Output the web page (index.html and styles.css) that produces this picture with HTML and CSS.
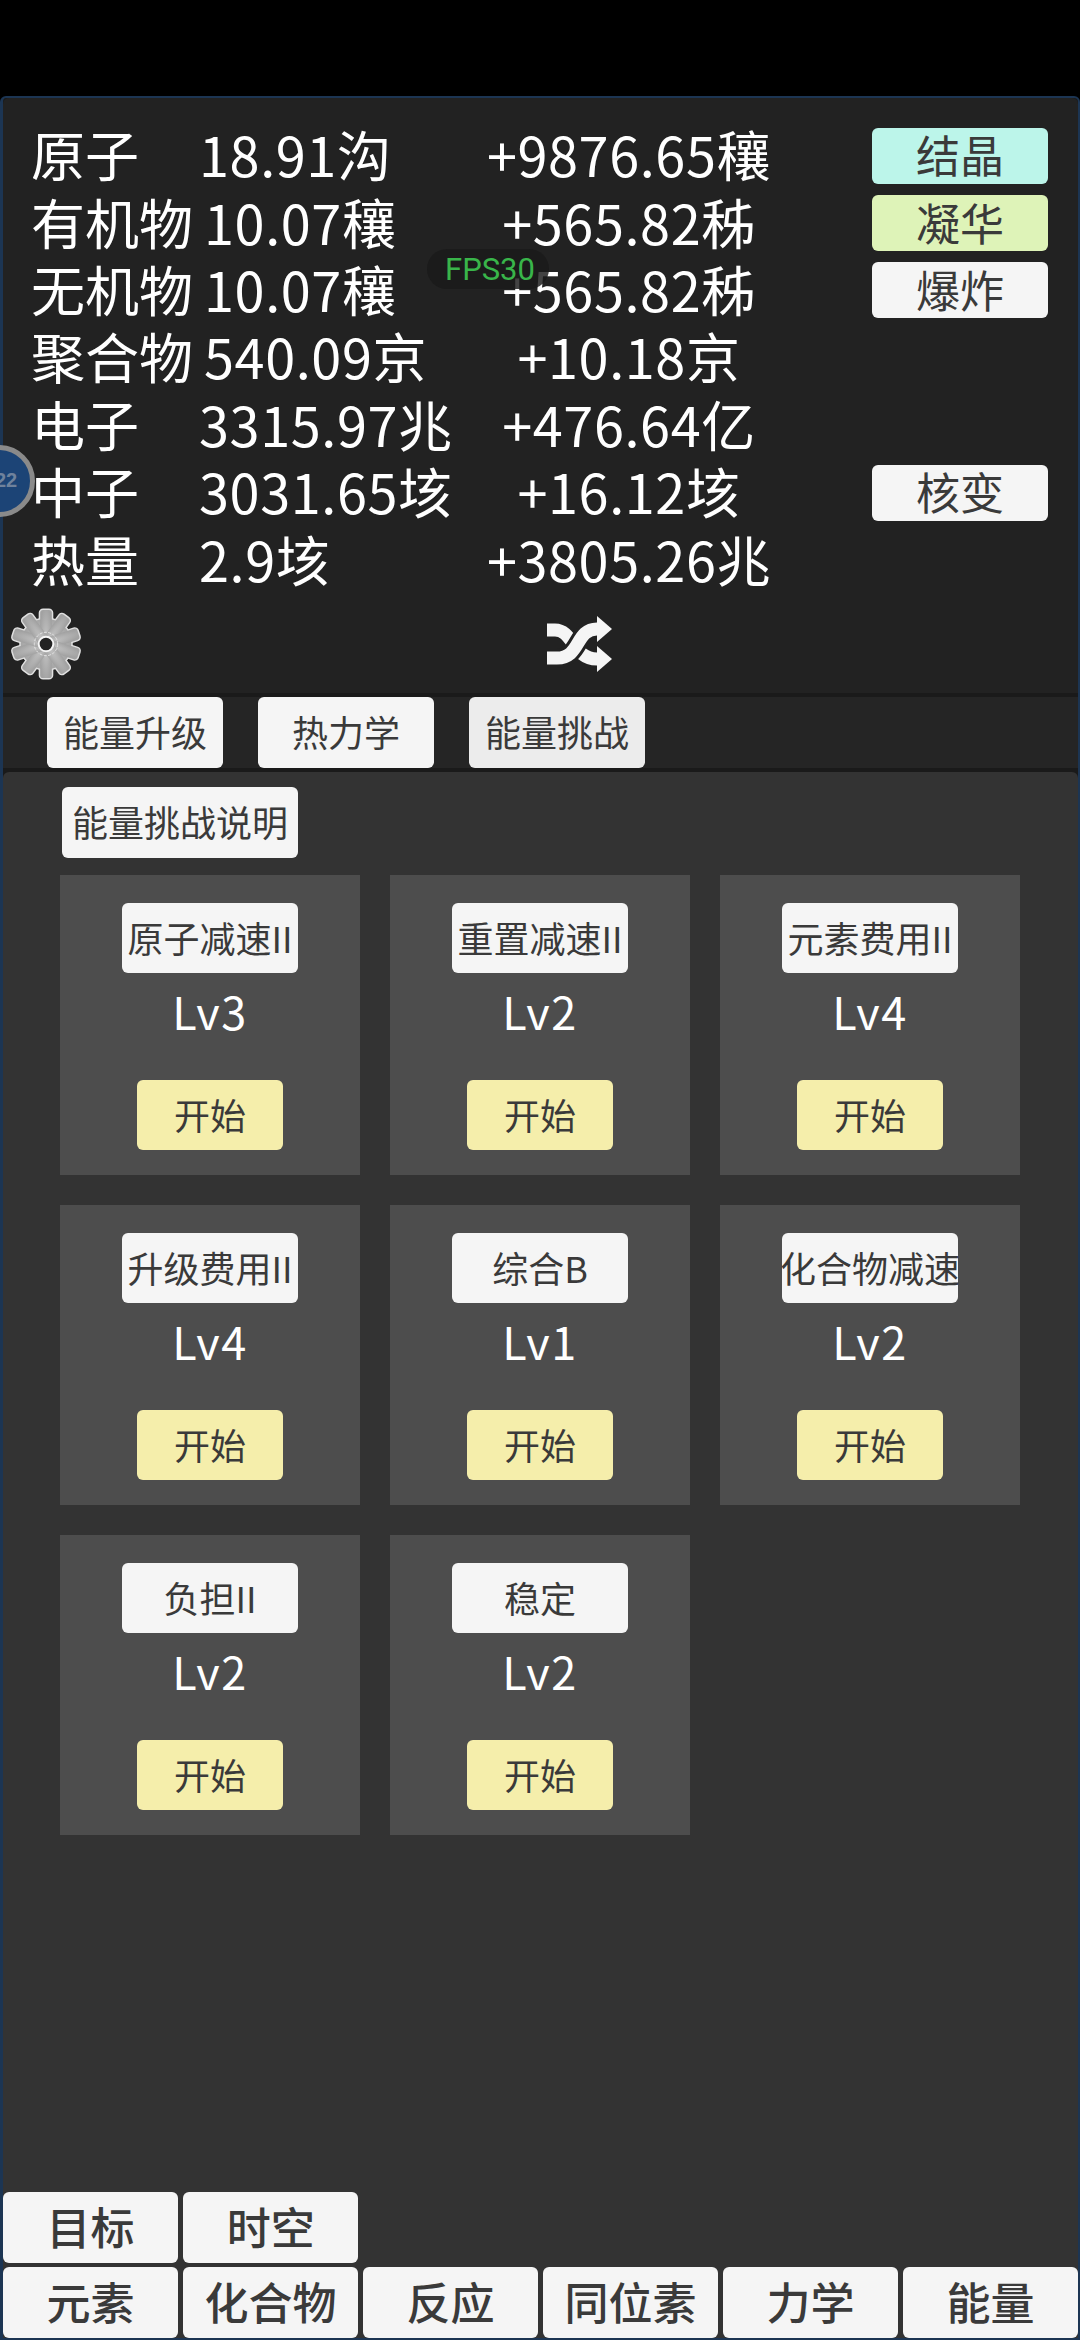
FILE: index.html
```html
<!DOCTYPE html>
<html lang="zh-CN">
<head>
  <meta charset="UTF-8">
  <meta name="viewport" content="width=device-width, initial-scale=1.0">
  <title>能量挑战</title>
  <link rel="stylesheet" href="styles.css">
</head>
<body>
  <div class="status-gap"></div>

  <div class="game">
    <header class="stats">
      <div class="stat-row">
        <div class="stat-main"><span class="name">原子</span><span>18.91沟</span></div>
        <span class="rate">+9876.65穰</span>
        <button class="btn side-btn crystal">结晶</button>
      </div>
      <div class="stat-row">
        <div class="stat-main"><span class="name">有机物</span><span>10.07穰</span></div>
        <span class="rate">+565.82秭</span>
        <button class="btn side-btn sublime">凝华</button>
      </div>
      <div class="stat-row">
        <div class="stat-main"><span class="name">无机物</span><span>10.07穰</span></div>
        <span class="rate">+565.82秭</span>
        <button class="btn side-btn">爆炸</button>
      </div>
      <div class="stat-row">
        <div class="stat-main"><span class="name">聚合物</span><span>540.09京</span></div>
        <span class="rate">+10.18京</span>
      </div>
      <div class="stat-row">
        <div class="stat-main"><span class="name">电子</span><span>3315.97兆</span></div>
        <span class="rate">+476.64亿</span>
      </div>
      <div class="stat-row">
        <div class="stat-main"><span class="name">中子</span><span>3031.65垓</span></div>
        <span class="rate">+16.12垓</span>
        <button class="btn side-btn">核变</button>
      </div>
      <div class="stat-row">
        <div class="stat-main"><span class="name">热量</span><span>2.9垓</span></div>
        <span class="rate">+3805.26兆</span>
      </div>

      <div class="tools">
        <svg class="gear" viewBox="-38 -38 76 76" aria-label="设置">
          <defs>
            <radialGradient id="gearFill" cx="50%" cy="50%" r="55%">
              <stop offset="0%" stop-color="#c8c8c8"/>
              <stop offset="100%" stop-color="#a2a2a2"/>
            </radialGradient>
            <g id="gearShape">
              <circle r="26"/>
              <rect x="-6" y="-35" width="12" height="70" rx="3"/>
              <rect x="-6" y="-35" width="12" height="70" rx="3" transform="rotate(36)"/>
              <rect x="-6" y="-35" width="12" height="70" rx="3" transform="rotate(72)"/>
              <rect x="-6" y="-35" width="12" height="70" rx="3" transform="rotate(108)"/>
              <rect x="-6" y="-35" width="12" height="70" rx="3" transform="rotate(144)"/>
            </g>
          </defs>
          <use href="#gearShape" fill="#e0e0e0" stroke="#e0e0e0" stroke-width="3"/>
          <use href="#gearShape" fill="url(#gearFill)"/>
          <circle r="12" fill="none" stroke="#e4e4e4" stroke-width="1" stroke-dasharray="3 1.5"/>
          <circle r="7.5" fill="#222222" stroke="#f5f5f5" stroke-width="2"/>
        </svg>
        <svg class="shuffle" viewBox="0 0 65 56" aria-label="切换">
          <path d="M0 14H8C26 14 26 43 50 43" fill="none" stroke="#f5f5f5" stroke-width="13"/>
          <path d="M50 30L65 43L50 56Z" fill="#f5f5f5"/>
          <path d="M0 42H10C34 42 28 13 50 13" fill="none" stroke="#222222" stroke-width="19"/>
          <path d="M0 42H10C34 42 28 13 50 13" fill="none" stroke="#f5f5f5" stroke-width="13"/>
          <path d="M50 0L65 13L50 26Z" fill="#f5f5f5"/>
        </svg>
      </div>
    </header>

    <nav class="sub-tabs">
      <button class="btn tab">能量升级</button>
      <button class="btn tab">热力学</button>
      <button class="btn tab current">能量挑战</button>
    </nav>

    <main class="content">
      <button class="btn help">能量挑战说明</button>
      <div class="cards">
        <div class="card">
          <button class="btn card-title">原子减速II</button>
          <div class="level">Lv3</div>
          <button class="btn start">开始</button>
        </div>
        <div class="card">
          <button class="btn card-title">重置减速II</button>
          <div class="level">Lv2</div>
          <button class="btn start">开始</button>
        </div>
        <div class="card">
          <button class="btn card-title">元素费用II</button>
          <div class="level">Lv4</div>
          <button class="btn start">开始</button>
        </div>
        <div class="card">
          <button class="btn card-title">升级费用II</button>
          <div class="level">Lv4</div>
          <button class="btn start">开始</button>
        </div>
        <div class="card">
          <button class="btn card-title">综合B</button>
          <div class="level">Lv1</div>
          <button class="btn start">开始</button>
        </div>
        <div class="card">
          <button class="btn card-title">化合物减速</button>
          <div class="level">Lv2</div>
          <button class="btn start">开始</button>
        </div>
        <div class="card">
          <button class="btn card-title">负担II</button>
          <div class="level">Lv2</div>
          <button class="btn start">开始</button>
        </div>
        <div class="card">
          <button class="btn card-title">稳定</button>
          <div class="level">Lv2</div>
          <button class="btn start">开始</button>
        </div>
      </div>

      <footer class="bottom-nav">
        <div class="nav-row">
          <button class="btn nav-btn">目标</button>
          <button class="btn nav-btn">时空</button>
        </div>
        <div class="nav-row">
          <button class="btn nav-btn">元素</button>
          <button class="btn nav-btn">化合物</button>
          <button class="btn nav-btn">反应</button>
          <button class="btn nav-btn">同位素</button>
          <button class="btn nav-btn">力学</button>
          <button class="btn nav-btn">能量</button>
        </div>
      </footer>
    </main>
  </div>

  <div class="fps">FPS30</div>
  <div class="float-ball">22</div>
</body>
</html>
```

FILE: styles.css
```css
* { box-sizing: border-box; }

html, body {
  margin: 0;
  height: 100%;
}

body {
  background: #000;
  color: #fff;
  font-family: "Noto Sans CJK SC", "Noto Sans", sans-serif;
  display: flex;
  flex-direction: column;
  overflow: hidden;
}

.status-gap {
  height: 96px;
  flex: none;
}

.game {
  flex: 1;
  display: flex;
  flex-direction: column;
  background: #1a1a1a;
  border: solid #1c3553;
  border-width: 2px 2px 2px 3px;
  border-radius: 6px 6px 0 0;
  min-height: 0;
}

.btn {
  border: none;
  margin: 0;
  padding: 0 0 3px;
  background: #f5f5f5;
  color: #3a3a3a;
  font-family: inherit;
  border-radius: 6px;
  white-space: nowrap;
  display: flex;
  align-items: center;
  justify-content: center;
  overflow: visible;
}

/* top resources */
.stats {
  background: #222;
  height: 595px;
  padding-top: 24px;
  border-radius: 6px 6px 0 0;
  flex: none;
}

.stat-row {
  display: flex;
  align-items: center;
  height: 67.4px;
  padding-left: 28px;
  font-size: 54px;
  line-height: 1;
  letter-spacing: 0.6px;
  white-space: nowrap;
}

.stat-main {
  display: flex;
  width: 448px;
  flex: none;
  margin-top: -3px;
}

.name {
  min-width: 168px;
  padding-right: 11px;
  letter-spacing: 0;
}

.rate {
  width: 300px;
  flex: none;
  margin-top: -3px;
  text-align: center;
}

.side-btn {
  width: 176px;
  height: 56px;
  margin-left: 93px;
  font-size: 44px;
  letter-spacing: 0;
}

.crystal { background: #bcf5ea; }
.sublime { background: #def3b8; }

.tools {
  position: relative;
  height: 90px;
}

.gear {
  position: absolute;
  left: 6px;
  top: 12px;
  width: 74px;
  height: 76px;
}

.shuffle {
  position: absolute;
  left: 544px;
  top: 22px;
  width: 65px;
  height: 56px;
}

/* second level tabs */
.sub-tabs {
  flex: none;
  display: flex;
  gap: 35px;
  height: 71px;
  margin-top: 4px;
  padding-left: 44px;
  background: #252525;
}

.tab {
  width: 176px;
  height: 71px;
  font-size: 36px;
}

.tab.current { background: #ececec; }

/* challenge list */
.content {
  flex: 1;
  margin-top: 4px;
  background: #333;
  border-radius: 6px 6px 0 0;
  display: flex;
  flex-direction: column;
  padding-top: 15px;
  min-height: 0;
}

.help {
  width: 236px;
  height: 71px;
  margin-left: 59px;
  font-size: 36px;
}

.cards {
  display: grid;
  grid-template-columns: repeat(3, 300px);
  gap: 30px;
  padding: 17px 0 0 57px;
}

.card {
  height: 300px;
  background: #4d4d4d;
  display: flex;
  flex-direction: column;
  align-items: center;
  padding-top: 28px;
}

.card-title {
  width: 176px;
  height: 70px;
  font-size: 36px;
}

.level {
  height: 107px;
  padding-top: 6px;
  font-size: 45px;
  letter-spacing: 1.5px;
  line-height: 64px;
}

.start {
  width: 146px;
  height: 70px;
  background: #f5eeab;
  font-size: 36px;
}

/* main nav at the bottom */
.bottom-nav {
  margin-top: auto;
  display: flex;
  flex-direction: column;
  gap: 4px;
}

.nav-row {
  display: flex;
  gap: 5.2px;
}

.nav-btn {
  width: 175px;
  height: 71px;
  font-size: 44px;
  font-weight: 500;
}

/* overlays */
.fps {
  position: absolute;
  left: 427px;
  top: 249px;
  width: 122px;
  height: 40px;
  padding-left: 18px;
  border-radius: 20px;
  background: rgba(26, 26, 26, 0.82);
  color: #39b54a;
  font-family: Roboto, sans-serif;
  font-size: 31px;
  line-height: 42px;
  white-space: nowrap;
}

.float-ball {
  position: absolute;
  left: -37px;
  top: 445px;
  width: 72px;
  height: 72px;
  padding-left: 14px;
  border-radius: 50%;
  border: 5px solid #8a8a8a;
  background: #1c4476;
  color: #6f829c;
  font-family: "Liberation Sans", sans-serif;
  font-size: 20px;
  font-weight: 700;
  line-height: 60px;
  text-align: center;
}
```
